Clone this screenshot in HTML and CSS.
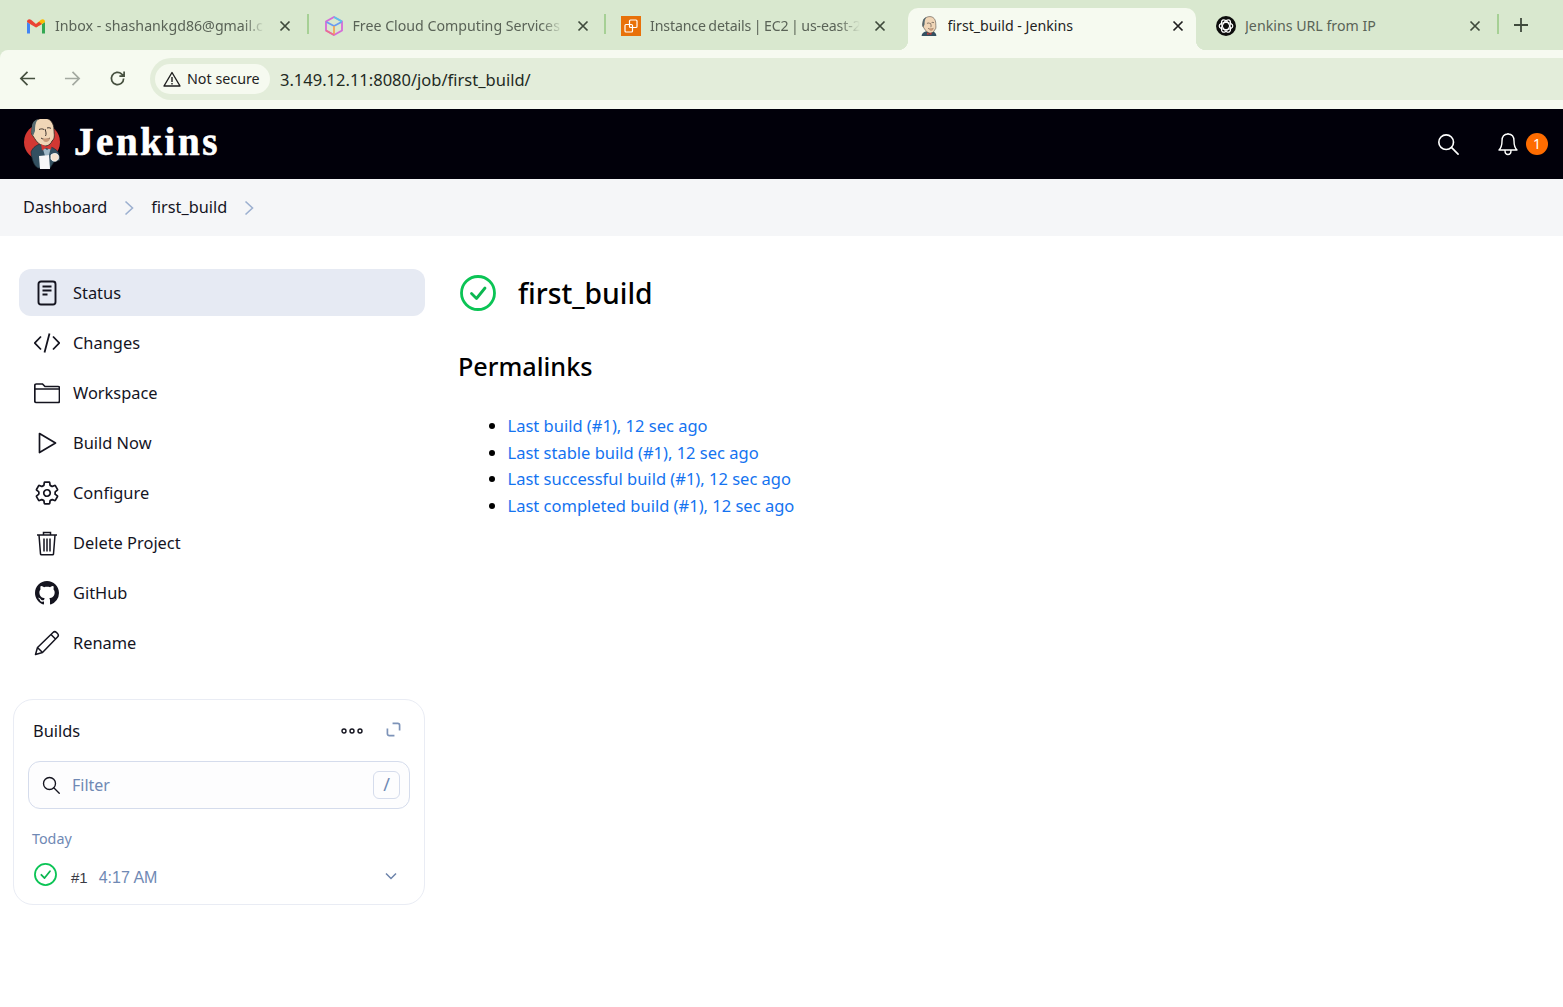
FILE: index.html
```html
<!DOCTYPE html>
<html lang="en">
<head>
<meta charset="utf-8">
<title>first_build - Jenkins</title>
<link rel="stylesheet" href="styles.css">
</head>
<body>
<svg class="defs" width="0" height="0" aria-hidden="true">
  <defs>
    <g id="jk-head">
      <path d="M14 15C14 8 20 4 26 4c6 0 10 5 10 12 0 4 1.500 8-2 11-2 5-7 6-11 4-4-2-6-6-8-9-2-1-2-5-1-7z" fill="#f0d6b7" stroke="#2a2320" stroke-width=".8"/>
      <path d="M14 13c0-5 3-7 6-8-3 4-3 8-3 12l-2 5c-2-2-2-6-1-9z" fill="#55696f"/>
      <path d="M21 15.500c2-.8 3.500-.8 5 0M29 14c1.500-.5 3-.3 4 .5M27 15c1 3 1.500 5 .5 7M23 24c3 2 6 2 9 0" fill="none" stroke="#2a2320" stroke-width=".9"/>
      <path d="M25 25c2-1 5-1 7-.5-.5 2-2 3.500-4 3.500s-3-1-3-3z" fill="#c79b7b"/>
    </g>
    <g id="jk-full">
      <circle cx="24" cy="28" r="18" fill="#d33833"/>
      <path d="M13 38c2-5 6-7 9-8l11 3c5 2 8 5 8 8l1 5-6 2-4 6H20c-4-2-6-8-7-16z" fill="#335061" stroke="#1d2b33" stroke-width=".7"/>
      <path d="M24 32l5 4 4-3-2 8-4 1z" fill="#9fb8c6"/>
      <use href="#jk-head"/>
      <path d="M23 30l5 2.500 6-2-1 5-5-1.500-4 2.500z" fill="#d33833"/>
      <path d="M21 42l10-1 1 14H22z" fill="#f7f7f7"/>
      <path d="M33 41c2-2 6-2 7 0 1.500 2 .5 5-2 6-2 .5-4 0-5-2z" fill="#f4e3cf" stroke="#fff" stroke-width=".8"/>
    </g>
    <symbol id="ok" viewBox="0 0 36 36">
      <circle cx="18" cy="18" r="16.500" fill="none" stroke="#0bc455" stroke-width="2.800"/>
      <path d="M11.500 18.500l5 5 8.500-10.500" fill="none" stroke="#0bb750" stroke-width="2.800" stroke-linecap="round" stroke-linejoin="round"/>
    </symbol>
    <symbol id="x" viewBox="0 0 12 12">
      <path d="M1.500 1.500l9 9M10.500 1.500l-9 9" stroke="currentColor" stroke-width="1.700" fill="none"/>
    </symbol>
    <symbol id="search" viewBox="0 0 24 24">
      <circle cx="10" cy="10" r="8" fill="none" stroke="currentColor" stroke-width="1.800"/>
      <path d="M16 16l7 7" stroke="currentColor" stroke-width="1.800" fill="none" stroke-linecap="round"/>
    </symbol>
  </defs>
</svg>

<div class="chrome">
  <div class="tabstrip">
    <div class="tab sep">
      <svg class="fav" viewBox="0 0 20 16"><path d="M1 15.500V4l3 2v9.500z" fill="#4285f4"/><path d="M16 15.500V6l3-2v11.500z" fill="#34a853"/><path d="M4 6L1 4c0-2.500 2-3.500 4-2.200L10 6v3.500z" fill="#ea4335"/><path d="M16 6l3-2c0-2.500-2-3.500-4-2.200L10 6v3.500z" fill="#fbbc04"/><path d="M16 6l-6 3.500V6l3-2.200z" fill="#ea4335"/></svg>
      <span class="tab-title">Inbox - shashankgd86@gmail.c</span>
      <svg class="tab-x"><use href="#x"/></svg>
    </div>
    <div class="tab sep">
      <svg class="fav" viewBox="0 0 20 20"><path d="M10 1l8 4.500v9L10 19l-8-4.500v-9z" fill="none" stroke="#d56ad8" stroke-width="1.800"/><path d="M2.500 6L10 10l7.500-4" fill="none" stroke="#6a9cf0" stroke-width="1.800"/><path d="M10 10v8.500" stroke="#f2a65a" stroke-width="1.800"/><path d="M10 1l8 4.500" stroke="#55c8ea" stroke-width="1.800"/><path d="M2 14.500L10 19" stroke="#ec6f8e" stroke-width="1.800"/></svg>
      <span class="tab-title">Free Cloud Computing Services</span>
      <svg class="tab-x"><use href="#x"/></svg>
    </div>
    <div class="tab">
      <svg class="fav" viewBox="0 0 20 20"><rect width="20" height="20" fill="#e8710a"/><rect x="8.500" y="4" width="7.500" height="7.500" rx="1" fill="none" stroke="#fff" stroke-width="1.200"/><rect x="4" y="8.500" width="7.500" height="7.500" rx="1" fill="none" stroke="#fff" stroke-width="1.200"/></svg>
      <span class="tab-title tight">Instance details | EC2 | us-east-2</span>
      <svg class="tab-x"><use href="#x"/></svg>
    </div>
    <div class="tab active">
      <svg class="fav" viewBox="12 3 25 34"><path d="M12 37c0-5 5-8 10-8h6c5 0 9 3 9 8z" fill="#335061"/><use href="#jk-head"/><path d="M21 31l4 2 4-2-.5 4-3.500-1-3.500 1z" fill="#d33833"/></svg>
      <span class="tab-title plain">first_build - Jenkins</span>
      <svg class="tab-x"><use href="#x"/></svg>
    </div>
    <div class="tab sep-right">
      <svg class="fav" viewBox="0 0 20 20"><circle cx="10" cy="10" r="10" fill="#0d0d0d"/><g fill="none" stroke="#fff" stroke-width="1.200"><ellipse cx="10" cy="10" rx="6.800" ry="3.500"/><ellipse cx="10" cy="10" rx="6.800" ry="3.500" transform="rotate(60 10 10)"/><ellipse cx="10" cy="10" rx="6.800" ry="3.500" transform="rotate(120 10 10)"/></g></svg>
      <span class="tab-title plain">Jenkins URL from IP</span>
      <svg class="tab-x"><use href="#x"/></svg>
    </div>
    <svg class="newtab" viewBox="0 0 14 14"><path d="M7 0v14M0 7h14" stroke="#3f4a3c" stroke-width="1.800"/></svg>
  </div>

  <div class="toolbar">
    <svg class="nav" viewBox="0 0 18 18"><path d="M17 9H2M9 2L2 9l7 7" fill="none" stroke="#46503f" stroke-width="1.800"/></svg>
    <svg class="nav dim" viewBox="0 0 18 18"><path d="M1 9h15M9 2l7 7-7 7" fill="none" stroke="#a3a9a0" stroke-width="1.800"/></svg>
    <svg class="nav" viewBox="0 0 18 18"><path d="M15.500 9a6.500 6.500 0 1 1-2-4.700L16 6.500M16 1.500v5h-5" fill="none" stroke="#46503f" stroke-width="1.800"/></svg>
    <div class="omnibox">
      <div class="chip">
        <svg class="warn" viewBox="0 0 18 16"><path d="M9 1.500L17 15H1z" fill="none" stroke="#1f1f1f" stroke-width="1.400" stroke-linejoin="round"/><path d="M9 6v5M9 12v1.500" stroke="#1f1f1f" stroke-width="1.400"/></svg>
        <span class="chip-text">Not secure</span>
      </div>
      <span class="url">3.149.12.11:8080/job/first_build/</span>
    </div>
  </div>
</div>

<header class="jk-header">
  <svg class="jk-logo" viewBox="6 5 36 50"><use href="#jk-full"/></svg>
  <span class="jk-word">Jenkins</span>
  <svg class="jk-search"><use href="#search"/></svg>
  <svg class="jk-bell" viewBox="0 0 20 24"><path d="M10 2c-4 0-6 3-6 7 0 4-1 7-3 9h18c-2-2-3-5-3-9 0-4-2-7-6-7zM10 2V1M7 18.500c0 3 1.500 4 3 4s3-1 3-4" fill="none" stroke="#fff" stroke-width="1.400" stroke-linejoin="round"/></svg>
  <span class="jk-badge">1</span>
</header>

<nav class="crumbs">
  <span>Dashboard</span>
  <svg class="chev" viewBox="0 0 10 16"><path d="M1.500 1.500L8.500 8l-7 6.500" fill="none" stroke="#9cb0d0" stroke-width="1.600"/></svg>
  <span>first_build</span>
  <svg class="chev" viewBox="0 0 10 16"><path d="M1.500 1.500L8.500 8l-7 6.500" fill="none" stroke="#9cb0d0" stroke-width="1.600"/></svg>
</nav>

<div class="page">
  <aside class="side">
    <ul class="menu">
      <li class="item current">
        <svg class="ico" viewBox="0 0 26 26"><rect x="4.500" y="1.500" width="17" height="23" rx="2.500" fill="none" stroke="#14141f" stroke-width="1.900"/><path d="M8.500 6.500h9M8.500 10.500h9M8.500 14.500h5" stroke="#14141f" stroke-width="1.900" fill="none"/></svg>
        <span>Status</span>
      </li>
      <li class="item">
        <svg class="ico" viewBox="0 0 26 26"><path d="M7 6.500L.8 13 7 19.500M19 6.500l6.200 6.500-6.200 6.500M15.500 3.500l-5 19" fill="none" stroke="#14141f" stroke-width="1.800"/></svg>
        <span>Changes</span>
      </li>
      <li class="item">
        <svg class="ico" viewBox="0 0 26 26"><path d="M.8 7V5.500A1.500 1.500 0 0 1 2.300 4h6.200l2.500 2.500h13a1.500 1.500 0 0 1 1.500 1.500v13a1.500 1.500 0 0 1-1.500 1.500H2.300A1.500 1.500 0 0 1 .8 21zM.8 9h24.400" fill="none" stroke="#14141f" stroke-width="1.700"/></svg>
        <span>Workspace</span>
      </li>
      <li class="item">
        <svg class="ico" viewBox="0 0 26 26"><path d="M5.500 3.500l16 9.500-16 9.500z" fill="none" stroke="#14141f" stroke-width="1.700" stroke-linejoin="round"/></svg>
        <span>Build Now</span>
      </li>
      <li class="item">
        <svg class="ico" viewBox="0 0 512 512"><path d="M262.290 192.310a64 64 0 1057.400 57.400 64.130 64.130 0 00-57.400-57.400zM416.390 256a154.340 154.340 0 01-1.530 20.790l45.210 35.460a10.810 10.810 0 012.450 13.750l-42.770 74a10.810 10.810 0 01-13.140 4.590l-44.900-18.080a16.110 16.110 0 00-15.170 1.750A164.480 164.480 0 01325 400.800a15.940 15.940 0 00-8.820 12.140l-6.730 47.890a11.080 11.080 0 01-10.680 9.170h-85.540a11.110 11.110 0 01-10.690-8.870l-6.720-47.820a16.070 16.070 0 00-9-12.220 155.300 155.300 0 01-21.460-12.570 16 16 0 00-15.110-1.710l-44.890 18.070a10.810 10.810 0 01-13.140-4.580l-42.770-74a10.800 10.800 0 012.450-13.750l38.210-30a16.050 16.050 0 006.070-14.080c-.36-4.170-.58-8.330-.58-12.500s.21-8.270.58-12.350a16 16 0 00-6.070-13.940l-38.190-30A10.810 10.810 0 0149.480 186l42.770-74a10.810 10.810 0 0113.140-4.590l44.900 18.080a16.110 16.110 0 0015.170-1.750A164.480 164.480 0 01187 111.200a15.940 15.940 0 008.820-12.140l6.730-47.890A11.080 11.080 0 01213.230 42h85.540a11.110 11.110 0 0110.690 8.870l6.720 47.820a16.070 16.070 0 009 12.220 155.300 155.300 0 0121.460 12.570 16 16 0 0015.110 1.710l44.890-18.070a10.810 10.810 0 0113.140 4.580l42.770 74a10.800 10.800 0 01-2.450 13.750l-38.210 30a16.050 16.050 0 00-6.070 14.080c.33 4.140.55 8.300.55 12.470z" fill="none" stroke="#14141f" stroke-width="34"/></svg>
        <span>Configure</span>
      </li>
      <li class="item">
        <svg class="ico" viewBox="0 0 26 26"><path d="M3 5h20M5 5l1.500 19a1 1 0 0 0 1 .8h11a1 1 0 0 0 1-.8L21 5M9.500 5V2.500h7V5M10 8.500v13M13 8.500v13M16 8.500v13" fill="none" stroke="#14141f" stroke-width="1.500"/></svg>
        <span>Delete Project</span>
      </li>
      <li class="item">
        <svg class="ico gh" viewBox="0 0 16 16"><path d="M8 0C3.580 0 0 3.580 0 8c0 3.540 2.290 6.530 5.470 7.590.4.070.55-.17.55-.38 0-.19-.01-.82-.01-1.490-2.010.37-2.530-.49-2.690-.94-.09-.23-.48-.94-.82-1.130-.28-.15-.68-.52-.01-.53.63-.01 1.080.58 1.230.82.72 1.210 1.870.87 2.330.66.070-.52.28-.87.51-1.070-1.780-.2-3.640-.89-3.640-3.950 0-.87.31-1.590.82-2.150-.08-.2-.36-1.020.08-2.120 0 0 .67-.21 2.200.82.64-.18 1.320-.27 2-.27.68 0 1.360.09 2 .27 1.530-1.040 2.200-.82 2.200-.82.44 1.100.16 1.920.08 2.120.51.56.82 1.270.82 2.150 0 3.070-1.870 3.750-3.650 3.950.29.25.54.73.54 1.480 0 1.070-.01 1.930-.01 2.200 0 .21.15.46.55.38A8.013 8.013 0 0016 8c0-4.420-3.580-8-8-8z" fill="#14141f"/></svg>
        <span>GitHub</span>
      </li>
      <li class="item">
        <svg class="ico" viewBox="0 0 26 26"><path d="M1.500 24.500l2-7L19 2.500a2.500 2.500 0 0 1 3.500 0l1 1a2.500 2.500 0 0 1 0 3.500L8.500 22.500zM17 4.500l4.500 4.500M3.500 17.500l5 5" fill="none" stroke="#14141f" stroke-width="1.500" stroke-linejoin="round"/></svg>
        <span>Rename</span>
      </li>
    </ul>

    <section class="builds">
      <div class="builds-head">
        <span class="builds-title">Builds</span>
        <svg class="dots" viewBox="0 0 22 8"><g fill="none" stroke="#14141f" stroke-width="1.400"><circle cx="3" cy="4" r="2"/><circle cx="11" cy="4" r="2"/><circle cx="19" cy="4" r="2"/></g></svg>
        <svg class="expand" viewBox="0 0 16 16"><path d="M7 1.500h5.500a2 2 0 0 1 2 2V9M9 14.500H3.500a2 2 0 0 1-2-2V7" fill="none" stroke="#7d93b8" stroke-width="1.800"/></svg>
      </div>
      <div class="filter">
        <svg class="filter-ico"><use href="#search"/></svg>
        <span class="filter-text">Filter</span>
        <kbd class="slash">/</kbd>
      </div>
      <div class="today">Today</div>
      <div class="build-row">
        <svg class="build-ok"><use href="#ok"/></svg>
        <span class="build-no">#1</span>
        <span class="build-time">4:17 AM</span>
        <svg class="build-chev" viewBox="0 0 12 8"><path d="M1 1.500l5 5 5-5" fill="none" stroke="#6c83ab" stroke-width="1.500"/></svg>
      </div>
    </section>
  </aside>

  <main class="content">
    <div class="title-row">
      <svg class="title-ok"><use href="#ok"/></svg>
      <h1>first_build</h1>
    </div>
    <h2>Permalinks</h2>
    <ul class="links">
      <li><a href="#">Last build (#1), 12 sec ago</a></li>
      <li><a href="#">Last stable build (#1), 12 sec ago</a></li>
      <li><a href="#">Last successful build (#1), 12 sec ago</a></li>
      <li><a href="#">Last completed build (#1), 12 sec ago</a></li>
    </ul>
  </main>
</div>
</body>
</html>
```
FILE: styles.css
```css
* { box-sizing: border-box; }
html, body { margin: 0; padding: 0; }
body {
  background: #fff;
  color: #14141f;
  font-family: "Noto Sans", "Open Sans", sans-serif;
  font-size: 16.400px;
  min-height: 1007px;
  overflow: hidden;
}
.defs { display: block; height: 0; }

.chrome { background: #d9e8cf; }
.tabstrip {
  display: flex;
  align-items: flex-end;
  height: 50px;
  padding-left: 11px;
}
.tab {
  position: relative;
  display: flex;
  align-items: center;
  flex: 0 0 297.500px;
  min-width: 0;
  height: 42px;
  padding: 0 17.500px 7px 15px;
  color: #5a6357;
  font-size: 14.200px;
}
.tab.sep::after, .tab.sep-right::after {
  content: "";
  position: absolute;
  right: 0;
  top: 6px;
  width: 2px;
  height: 20px;
  background: #a6d095;
}
.tab.active {
  z-index: 1;
  background: #f6faf0;
  color: #1f1f1f;
  border-radius: 10px 10px 0 0;
  margin: 0 5px 0 4px;
  flex-basis: 288.500px;
  padding-left: 11px;
  padding-right: 12.500px;
}
.tab.active::before, .tab.active::after {
  content: "";
  position: absolute;
  bottom: 0;
  width: 10px;
  height: 10px;
}
.tab.active::before {
  left: -10px;
  background: radial-gradient(circle at 0 0, transparent 10px, #f6faf0 10.500px);
}
.tab.active::after {
  right: -10px;
  background: radial-gradient(circle at 100% 0, transparent 10px, #f6faf0 10.500px);
}
.tab .fav { flex: none; width: 20px; height: 20px; margin-right: 9px; }
.tab-title {
  flex: 1;
  min-width: 0;
  white-space: nowrap;
  overflow: hidden;
  -webkit-mask-image: linear-gradient(to right, #000 90%, transparent 100%);
  mask-image: linear-gradient(to right, #000 90%, transparent 100%);
}
.tab-title.plain { -webkit-mask-image: none; mask-image: none; }
.tab-title.tight { word-spacing: -1px; letter-spacing: -.15px; }
.tab-x { flex: none; width: 12px; height: 12px; margin-left: 14px; color: #3f4a3c; }
.active .tab-x { color: #1f1f1f; }
.newtab { width: 14px; height: 14px; margin: 0 0 18px 15.500px; }

.toolbar {
  display: flex;
  align-items: center;
  height: 59px;
  padding: 8px 0 9px 19px;
  border-radius: 8px 0 0 0;
  background: #f6faf0;
}
.nav { flex: none; width: 17px; height: 17px; margin: -2px 28px 0 0; }
.omnibox {
  flex: 1;
  display: flex;
  align-items: center;
  height: 42px;
  margin-left: -4px;
  padding-left: 5px;
  border-radius: 21px 0 0 21px;
  background: #e3edda;
}
.chip {
  display: flex;
  align-items: center;
  gap: 6px;
  width: 115px;
  height: 30px;
  padding-left: 8px;
  border-radius: 15px;
  background: #f6faf0;
  color: #1f1f1f;
  font-size: 14.300px;
}
.chip-text { margin-top: -2px; }
.warn { width: 18px; height: 16px; flex: none; }
.url { margin-left: 10px; font-size: 16.500px; color: #1f2a1f; }

.jk-header {
  display: flex;
  align-items: center;
  height: 70px;
  padding: 0 15px 0 24px;
  background: #01000a;
  color: #fff;
}
.jk-logo { width: 36px; height: 50px; }
.jk-word {
  margin-left: 14px;
  margin-bottom: 6px;
  font-family: "Liberation Serif", "DejaVu Serif", serif;
  font-weight: 700;
  font-size: 39px;
  letter-spacing: 2.600px;
  -webkit-text-stroke: .6px #fff;
}
.jk-search { width: 22px; height: 22px; margin-left: auto; color: #fff; }
.jk-bell { width: 20px; height: 24px; margin-left: 39px; }
.jk-badge {
  width: 22px;
  height: 22px;
  margin-left: 8px;
  border-radius: 50%;
  background: #fe6c00;
  color: #fff;
  font-size: 14px;
  line-height: 22px;
  text-align: center;
}

.crumbs {
  display: flex;
  align-items: center;
  height: 57px;
  padding: 0 0 1px 23px;
  background: #f5f6f8;
  color: #14141f;
  font-size: 16.300px;
}
.chev { width: 10px; height: 16px; margin: 2px 17px 0 17px; }

.page {
  display: flex;
  padding-top: 33px;
}
.side {
  flex: none;
  width: 412px;
  margin-left: 13px;
}
.menu { list-style: none; margin: 0; padding: 0 0 0 6px; }
.item {
  display: flex;
  align-items: center;
  height: 47px;
  margin-bottom: 3px;
  padding-left: 15px;
  border-radius: 12px;
}
.item span { margin-top: -1px; }
.item.current { background: #e6eaf3; }
.ico { flex: none; width: 26px; height: 26px; margin-right: 13px; }
.gh { width: 24px; height: 24px; margin: 0 14px 0 1px; }

.builds {
  height: 206px;
  margin-top: 33px;
  padding: 0 14px;
  border: 1px solid #e9ecf4;
  border-radius: 20px;
}
.builds-head {
  display: flex;
  align-items: center;
  height: 61px;
  padding-left: 5px;
}
.builds-title { font-size: 16.400px; margin-right: auto; }
.dots { width: 22px; height: 8px; margin-right: 23px; }
.expand { width: 15px; height: 15px; margin: -2px 9px 0 0; }
.filter {
  display: flex;
  align-items: center;
  height: 48px;
  padding: 0 9px 0 13px;
  border: 1px solid #d5dcec;
  border-radius: 12px;
  background: #fdfdfe;
}
.filter-ico { width: 18px; height: 18px; color: #14141f; }
.filter-text { margin: 0 auto 0 12px; color: #7089b4; font-size: 16px; }
.slash {
  width: 27px;
  height: 28px;
  border: 1px solid #d5dcec;
  border-radius: 6px;
  color: #7089b4;
  font-family: inherit;
  font-size: 18px;
  line-height: 25px;
  text-align: center;
}
.today { margin: 20px 0 0 4px; color: #7089b4; font-size: 14.300px; line-height: 20px; }
.build-row {
  display: flex;
  align-items: center;
  height: 40px;
  margin-top: 9px;
  padding-left: 6px;
}
.build-ok { width: 23px; height: 23px; margin: -8px 14px 0 0; }
.build-no { margin: -2px 11px 0 0; color: #3a3a44; font-size: 15px; font-family: "Liberation Sans", sans-serif; }
.build-time { color: #7089b4; font-size: 16px; font-family: "Liberation Sans", sans-serif; }
.build-chev { width: 12px; height: 8px; margin: -4px 13px 0 auto; }

.content { margin-left: 33px; flex: 1; }
.title-row { display: flex; align-items: center; height: 48px; }
.title-ok { width: 36px; height: 36px; margin: 0 22px 0 2px; }
h1 { margin: 0; font-size: 28.300px; font-weight: 550; color: #000; }
h2 { margin: 30px 0 0; font-size: 25.200px; font-weight: 550; line-height: 38px; color: #000; }
.links { margin: 28px 0 0; padding-left: 49.500px; font-size: 16.500px; }
.links li { height: 26.500px; line-height: 26.500px; }
.links li::marker { color: #000; font-size: 17px; }
.links a { color: #1473f0; text-decoration: none; }
```
